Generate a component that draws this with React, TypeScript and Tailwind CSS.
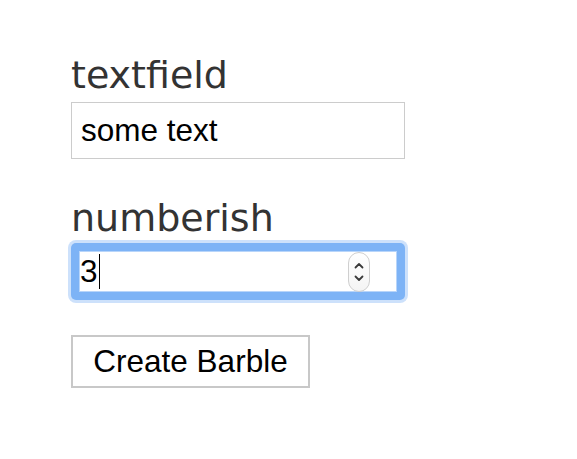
import { useState } from 'react'

const labelClass =
  "block h-[44px] text-[38px] leading-[44px] text-[#333333] font-['DejaVu_Sans',sans-serif]"
const fieldFont = "font-['Liberation_Sans',Arial,sans-serif] text-[31.5px] text-black"

function Spinner() {
  return (
    <span className="flex h-[40px] w-[22px] flex-col items-center justify-center gap-[6px] rounded-[11px] border border-[#cfcfcf] bg-gradient-to-b from-white to-[#f4f4f4]">
      <svg width="10" height="7" viewBox="0 0 10 7" fill="none">
        <path d="M1.5 5.5 5 2l3.5 3.5" stroke="#3a3a3a" strokeWidth="1.8" strokeLinecap="round" strokeLinejoin="round" />
      </svg>
      <svg width="10" height="7" viewBox="0 0 10 7" fill="none">
        <path d="M1.5 1.5 5 5l3.5-3.5" stroke="#3a3a3a" strokeWidth="1.8" strokeLinecap="round" strokeLinejoin="round" />
      </svg>
    </span>
  )
}

export default function App() {
  const [text, setText] = useState('some text')

  return (
    <div className="min-h-[459px] w-[577px] bg-white">
      <form
        className="flex flex-col items-start pl-[71px] pt-[53px]"
        onSubmit={(event) => event.preventDefault()}
      >
        <label className={labelClass}>textfield</label>
        <input
          className={`mt-[5px] h-[57px] w-[334px] border border-[#cccccc] bg-white px-[9px] outline-none ${fieldFont}`}
          value={text}
          onChange={(event) => setText(event.target.value)}
        />

        <label className={`mt-[37px] ${labelClass}`}>numberish</label>
        {/* focused number field: soft glow + thick focus ring */}
        <div className="-ml-[3px] rounded-[8px] bg-[#cde1fb] p-[3px]">
          <div className="h-[57px] w-[334px] rounded-[5px] bg-[#7db3f6] p-[8px]">
            <div className="flex h-full w-full items-center border border-[#b8d5fa] bg-white pr-[26px]">
              <span className={`leading-none ${fieldFont}`}>3</span>
              <span className="ml-[1px] h-[35px] w-px bg-black" />
              <span className="flex-1" />
              <Spinner />
            </div>
          </div>
        </div>

        <button
          type="submit"
          className={`mt-[32px] h-[53px] w-[239px] border-2 border-[#c8c8c8] bg-white leading-none ${fieldFont}`}
        >
          Create Barble
        </button>
      </form>
    </div>
  )
}
